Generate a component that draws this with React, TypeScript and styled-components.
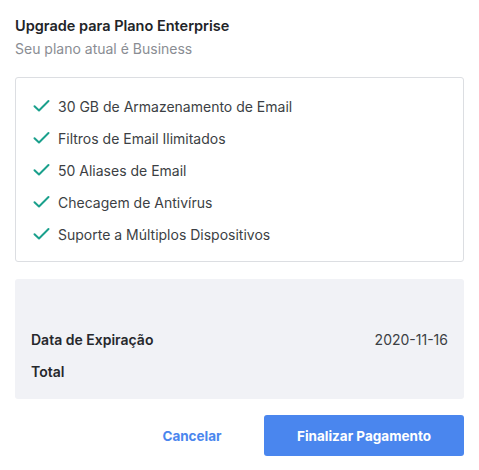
import styled, { createGlobalStyle } from "styled-components";

const GlobalStyle = createGlobalStyle`
  body {
    margin: 0;
    background: #ffffff;
    font-family: Inter, "Noto Sans", sans-serif;
  }
`

const Dialog = styled.div`
  width: 449px;
  padding: 16px 15px 0 15px;
  display: flex;
  flex-direction: column;
`

const Title = styled.h2`
  margin: 0;
  font-size: 14.5px;
  font-weight: 600;
  color: #222428;
  line-height: 20px;
`

const Subtitle = styled.p`
  margin: 4px 0 0 0;
  font-size: 14px;
  color: #8a8d93;
  line-height: 18px;
`

const FeatureBox = styled.ul`
  margin: 19px 0 0 0;
  padding: 18px 17px 17px 17px;
  list-style: none;
  border: 1px solid #dcdee2;
  border-radius: 3px;
  display: flex;
  flex-direction: column;
  gap: 12px;
`

const Feature = styled.li`
  display: flex;
  align-items: center;
  gap: 8px;
  height: 20px;
  font-size: 14px;
  color: #3c3f44;
`

const SummaryBox = styled.div`
  margin-top: 17px;
  background: #f1f2f6;
  border-radius: 3px;
  padding: 50px 16px 18px 16px;
  display: flex;
  flex-direction: column;
  gap: 12px;
`

const SummaryRow = styled.div`
  display: flex;
  justify-content: space-between;
  align-items: center;
  height: 20px;
  font-size: 14px;
`

const Label = styled.span`
  font-weight: 600;
  color: #26282c;
`

const Value = styled.span`
  color: #3c3f44;
`

const Actions = styled.div`
  margin-top: 16px;
  display: flex;
  justify-content: flex-end;
`

const Button = styled.button<{ $primary?: boolean }>`
  height: 41px;
  width: ${p => (p.$primary ? "200px" : "144px")};
  border: none;
  border-radius: 3px;
  font-family: inherit;
  font-size: 13.5px;
  font-weight: 700;
  cursor: pointer;
  background: ${p => (p.$primary ? "#4a86ee" : "transparent")};
  color: ${p => (p.$primary ? "#ffffff" : "#4a86ee")};
`

const Check = () => (
  <svg width="17" height="14" viewBox="0 0 17 14" fill="none">
    <path d="M1.5 7.2 L6 11.5 L15.5 2" stroke="#1aa08c" strokeWidth="2" strokeLinecap="round" strokeLinejoin="round" />
  </svg>
)

const features = [
  "30 GB de Armazenamento de Email",
  "Filtros de Email Ilimitados",
  "50 Aliases de Email",
  "Checagem de Antivírus",
  "Suporte a Múltiplos Dispositivos",
]

export default function App() {
  return (
    <>
      <GlobalStyle />
      <Dialog>
        <Title>Upgrade para Plano Enterprise</Title>
        <Subtitle>Seu plano atual é Business</Subtitle>
        <FeatureBox>
          {features.map((f, idx) => (
            <Feature key={idx}>
              <Check />
              {f}
            </Feature>
          ))}
        </FeatureBox>
        <SummaryBox>
          <SummaryRow>
            <Label>Data de Expiração</Label>
            <Value>2020-11-16</Value>
          </SummaryRow>
          <SummaryRow>
            <Label>Total</Label>
          </SummaryRow>
        </SummaryBox>
        <Actions>
          <Button>Cancelar</Button>
          <Button $primary>Finalizar Pagamento</Button>
        </Actions>
      </Dialog>
    </>
  )
}
